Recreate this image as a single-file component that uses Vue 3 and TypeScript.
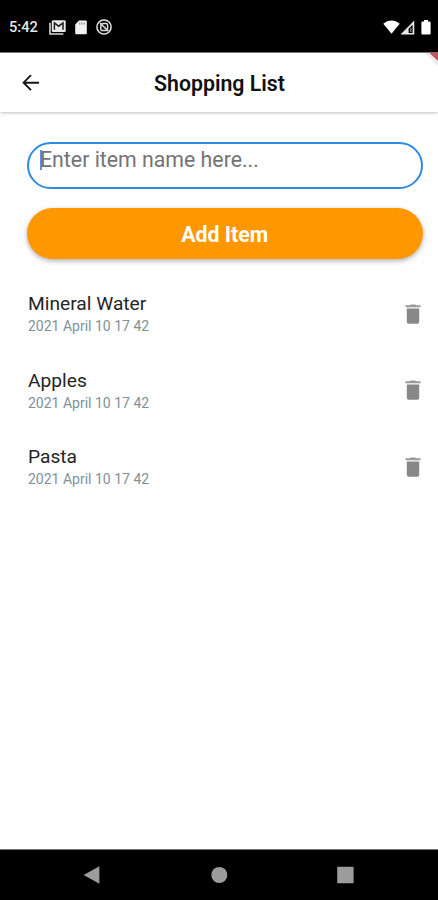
<script setup lang="ts">
import { ref } from 'vue'

interface Item {
  id: number
  name: string
  date: string
}

const draft = ref('')
const items = ref<Item[]>([
  { id: 1, name: 'Mineral Water', date: '2021 April 10 17 42' },
  { id: 2, name: 'Apples', date: '2021 April 10 17 42' },
  { id: 3, name: 'Pasta', date: '2021 April 10 17 42' },
])

function addItem(): void {
  const name = draft.value.trim()
  if (!name) return
  items.value.push({ id: Date.now(), name, date: '2021 April 10 17 42' })
  draft.value = ''
}

function removeItem(id: number): void {
  items.value = items.value.filter((item) => item.id !== id)
}
</script>

<template>
  <div class="screen">
    <div class="status">
      <span class="clock">5:42</span>
      <svg class="mail" viewBox="0 0 17 15">
        <path d="M1 2.8v11.2h13.4" fill="none" stroke="#d8d8d8" stroke-width="1.6" />
        <rect x="2.8" y="0.3" width="13.9" height="11.6" rx="1.2" fill="#e8e8e8" />
        <path d="M5.4 9.8V3l4.3 3.2L14 3v6.8" fill="none" stroke="#1c1c1c" stroke-width="1.5" />
      </svg>
      <svg class="card" viewBox="0 0 12 15">
        <path d="M4 .5h6.8q1 0 1 1v11.8q0 1-1 1H1.2q-1 0-1-1V4.6z" fill="#f2f2f2" />
        <path d="M4.8 2.4v2.2M7 2.4v2.2M9.2 2.4v2.2" stroke="#777" stroke-width=".9" />
      </svg>
      <svg class="sync" viewBox="0 0 16 16">
        <circle cx="8" cy="8" r="7.1" fill="none" stroke="#e4e4e4" stroke-width="1.5" />
        <path d="M4.8 11.2V6.2L6.7 4.6h3.2q1.7 0 1.7 1.7v3.4q0 1.7-1.7 1.7H4.8M4 4l8.3 8.3M7.6 8.4h2" fill="none" stroke="#dcdcdc" stroke-width="1.5" />
      </svg>
      <span class="spacer"></span>
      <svg class="wifi" viewBox="0 0 17 14">
        <path d="M.3 3.8C5-.7 12-.7 16.7 3.8L8.5 13.8z" fill="#fff" />
      </svg>
      <svg class="signal" viewBox="0 0 15 15">
        <path fill-rule="evenodd" d="M14.3.5v14H.5zM12.6 4.8 8.6 8.8v4.2h4z" fill="#e8e8e8" />
        <path d="M10.9 8v4" stroke="#aaa" stroke-width="1" />
      </svg>
      <svg class="battery" viewBox="0 0 10 15">
        <path d="M3 0h4v1.4h1.6q1 0 1 1v11q0 1-1 1H1.4q-1 0-1-1v-11q0-1 1-1H3z" fill="#fff" />
      </svg>
    </div>

    <header class="appbar">
      <button class="back" aria-label="Back">
        <svg viewBox="0 0 18 18">
          <path d="M17 8.7H1.6M9 1.2 1.6 8.7 9 16.2" fill="none" stroke="#171717" stroke-width="1.9" />
        </svg>
      </button>
      <h1>Shopping List</h1>
      <svg class="ribbon" viewBox="0 0 14 14">
        <path d="M1 0 14 13V7L7 0z" fill="#ddd" opacity=".6" />
        <path d="M5.5 0H14v8z" fill="#c8505a" />
      </svg>
    </header>

    <main class="content">
      <label class="field">
        <span class="caret"></span>
        <input v-model="draft" placeholder="Enter item name here..." @keyup.enter="addItem" />
      </label>
      <button class="add" @click="addItem">Add Item</button>
      <ul class="list">
        <li v-for="item in items" :key="item.id" class="row">
          <div class="info">
            <span class="name">{{ item.name }}</span>
            <span class="date">{{ item.date }}</span>
          </div>
          <button class="trash" aria-label="Delete" @click="removeItem(item.id)">
            <svg viewBox="0 0 16 20">
              <path d="M.5 1.3h4.2L5.8.4h4.4l1.1.9h4.2v2H.5z" fill="#999" />
              <path d="M1.8 4.4h12.4v13.4q0 1.9-1.9 1.9H3.7q-1.9 0-1.9-1.9z" fill="#888" />
            </svg>
          </button>
        </li>
      </ul>
    </main>

    <nav class="navbar">
      <svg viewBox="0 0 18 18"><path d="M16.4.3v17.4L.6 9z" fill="#9c9c9c" /></svg>
      <svg viewBox="0 0 18 18"><circle cx="9.3" cy="9" r="8" fill="#9c9c9c" /></svg>
      <svg viewBox="0 0 18 18"><rect x="1.2" y=".8" width="16.4" height="16.4" rx=".8" fill="#9c9c9c" /></svg>
    </nav>
  </div>
</template>

<style>
body {
  margin: 0;
  background: #fff;
}
</style>

<style scoped>
.screen {
  display: flex;
  flex-direction: column;
  width: 438px;
  height: 900px;
  overflow: hidden;
  background: #fefefe;
  font-family: Roboto, "Liberation Sans", sans-serif;
}
button {
  border: 0;
  padding: 0;
  background: none;
  font-family: inherit;
}
svg {
  display: block;
  flex: none;
}
.status {
  box-sizing: border-box;
  display: flex;
  align-items: center;
  height: 52px;
  padding: 2px 7px 0 9px;
  background: #000;
}
.clock {
  width: 40px;
  color: #e6e6e6;
  font-size: 14.6px;
  font-weight: 500;
  line-height: 18px;
}
.mail {
  width: 17px;
  height: 15px;
}
.card {
  width: 12px;
  height: 15px;
  margin-left: 9px;
}
.sync {
  width: 16px;
  height: 16px;
  margin-left: 9px;
}
.spacer {
  flex: 1;
}
.wifi {
  width: 17px;
  height: 14px;
}
.signal {
  width: 15px;
  height: 15px;
}
.battery {
  width: 10px;
  height: 15px;
  margin-left: 6px;
}
.appbar {
  box-sizing: border-box;
  display: grid;
  grid-template-columns: 60px 1fr 60px;
  align-items: center;
  height: 60px;
  border-top: 1px solid #777;
  background: #fff;
  box-shadow: 0 1px 3px rgba(0, 0, 0, 0.24);
}
.back {
  padding-left: 22px;
}
.back svg {
  width: 18px;
  height: 18px;
}
h1 {
  margin: 2px 0 0 1px;
  color: #111;
  font-size: 21.3px;
  font-weight: 600;
  line-height: 26px;
  text-align: center;
}
.ribbon {
  align-self: start;
  justify-self: end;
  width: 14px;
  height: 14px;
}
.content {
  display: flex;
  flex: 1;
  flex-direction: column;
  padding: 30px 15.5px 0 27px;
}
.field {
  box-sizing: border-box;
  display: flex;
  align-items: flex-start;
  height: 47px;
  padding: 6px 11px 0;
  border: 2px solid #2c8ce2;
  border-radius: 24px;
}
.caret {
  width: 2px;
  height: 20px;
  margin-right: -2px;
  background: #668be5;
}
.field input {
  flex: 1;
  min-width: 0;
  height: 18px;
  padding: 0;
  border: 0;
  outline: 0;
  background: none;
  color: #222;
  font-family: inherit;
  font-size: 21.3px;
  line-height: 18px;
}
.field input::placeholder {
  color: #747474;
  opacity: 1;
}
.add {
  height: 51px;
  margin-top: 19px;
  padding-top: 2px;
  border-radius: 26px;
  background: #ff9800;
  box-shadow: 0 2px 5px rgba(0, 0, 0, 0.3);
  color: #fff;
  font-size: 21.3px;
  font-weight: 700;
  line-height: 49px;
}
.list {
  display: grid;
  grid-auto-rows: 76.6px;
  margin: 16px 0 0;
  padding: 0;
  list-style: none;
}
.row {
  display: flex;
  align-items: center;
  justify-content: space-between;
  padding-left: 1px;
}
.info {
  display: flex;
  flex-direction: column;
  gap: 1px;
}
.name {
  padding-top: 1px;
  color: #252525;
  font-size: 19.2px;
  line-height: 24px;
}
.date {
  color: #80929a;
  font-size: 14px;
  line-height: 18px;
}
.trash {
  margin: 1px 2px 0 0;
}
.trash svg {
  width: 16px;
  height: 20px;
}
.navbar {
  box-sizing: border-box;
  display: flex;
  justify-content: space-between;
  height: 51px;
  padding: 16px 84px 0 83px;
  border-top: 1px solid #777;
  background: #000;
}
.navbar svg {
  width: 18px;
  height: 18px;
}
</style>
